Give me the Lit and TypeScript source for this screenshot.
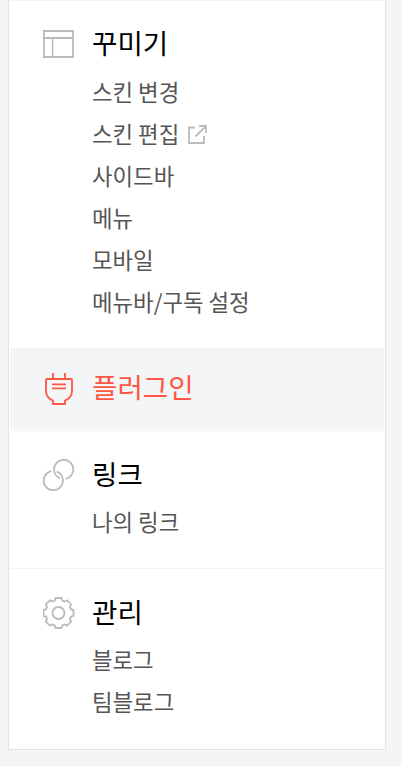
import { LitElement, html, css, svg } from "lit";
import { customElement } from "lit/decorators.js";

const TEETH = 8;

/** Outline of a cog wheel centred on (cx, cy). */
function cog(cx: number, cy: number): string {
  const points: string[] = [];
  const profile = [[-3.8, 12.4], [-2.9, 15], [2.9, 15], [3.8, 12.4]];
  for (let i = 0; i < TEETH; i++) {
    const a = (i * 2 * Math.PI) / TEETH;
    for (const [x, r] of profile) {
      const px = cx + x * Math.cos(a) + r * Math.sin(a);
      const py = cy + x * Math.sin(a) - r * Math.cos(a);
      points.push(`${px.toFixed(2)} ${py.toFixed(2)}`);
    }
  }
  return `M${points.join("L")}Z`;
}

const icons: Record<string, unknown> = {
  skin: svg`<path d="M1 3H30V29H1ZM1 10H30"/><path stroke-width="1.5" d="M9.6 10V29"/>`,
  plug: svg`<path d="M10 0V6M22 0V6M4 6H28Q29 6 29 7V18C29 23 26 26 22 27.5V31H10V27.5C6 26 3 23 3 18V7Q3 6 4 6ZM9 11.3H23M9 15.3H23"/>`,
  link: svg`<path d="M22.7 19.8A9.6 9.6 0 1 0 17 19.3M8.4 12.2A9.6 9.6 0 1 0 13.9 12.7"/>`,
  gear: svg`<path d=${cog(15.5, 16)}/><circle cx="15.5" cy="16" r="6"/>`,
};

interface Item { text: string; external?: boolean }
interface Group { icon: string; title: string; items: Item[]; on?: boolean }

const groups: Group[] = [
  {
    icon: "skin",
    title: "꾸미기",
    items: [
      { text: "스킨 변경" },
      { text: "스킨 편집", external: true },
      { text: "사이드바" },
      { text: "메뉴" },
      { text: "모바일" },
      { text: "메뉴바/구독 설정" },
    ],
  },
  { icon: "plug", title: "플러그인", items: [], on: true },
  { icon: "link", title: "링크", items: [{ text: "나의 링크" }] },
  { icon: "gear", title: "관리", items: [{ text: "블로그" }, { text: "팀블로그" }] },
];

@customElement("app-root")
export class AppRoot extends LitElement {
  static styles = css`
    :host { display: block; height: 766px; background: #f3f5f7; overflow: hidden; font-family: "Noto Sans CJK KR", sans-serif; }
    nav { box-sizing: border-box; width: 378px; height: 750px; margin-left: 8px; padding: 0 1px; background: #fff; border: 1px solid #e0e3eb; border-top: 0; }
    .group { box-sizing: border-box; border-top: 1px solid #f1f3f6; padding: 22px 0 26px 33px; display: grid; grid-template-columns: 49px 1fr; }
    .group:first-child { padding-top: 21px; }
    .group:first-child ul { margin-top: 8px; }
    .group.on { background: #f3f5f7; border-top-color: #f3f5f7; height: 81px; margin-bottom: 1px; padding-top: 17px; padding-bottom: 0; }
    .icon { width: 32px; height: 32px; margin-top: 6px; fill: none; stroke: #bbb; stroke-width: 1.8; }
    .on .icon { margin-top: 7px; stroke: #ff5544; }
    h2 { margin: 0; font-size: 27.6px; line-height: 40px; font-weight: 400; color: #000; white-space: nowrap; }
    .on h2 { color: #ff5544; }
    ul { list-style: none; margin: 7px 0 0; padding: 0; }
    li { display: flex; align-items: center; height: 42px; line-height: 42px; font-size: 22.35px; color: #555; white-space: nowrap; }
    .out { width: 20px; height: 20px; margin: 4px 0 0 9px; fill: none; stroke: #bbb; stroke-width: 1.8; }
  `;
  render() {
    return html`<nav>${groups.map((g) => html`<section class="group ${g.on ? "on" : ""}">
      <svg class="icon" viewBox="0 0 32 32">${icons[g.icon]}</svg>
      <div>
        <h2>${g.title}</h2>
        ${g.items.length
          ? html`<ul>${g.items.map((t) => html`<li>${t.text}${t.external
              ? html`<svg class="out" viewBox="0 0 20 20"><path d="M7 2.5H1V18H16V11M7.5 11.5L17.5 1.5M11 1H18V8"/></svg>`
              : ""}</li>`)}</ul>`
          : ""}
      </div>
    </section>`)}</nav>`;
  }
}
